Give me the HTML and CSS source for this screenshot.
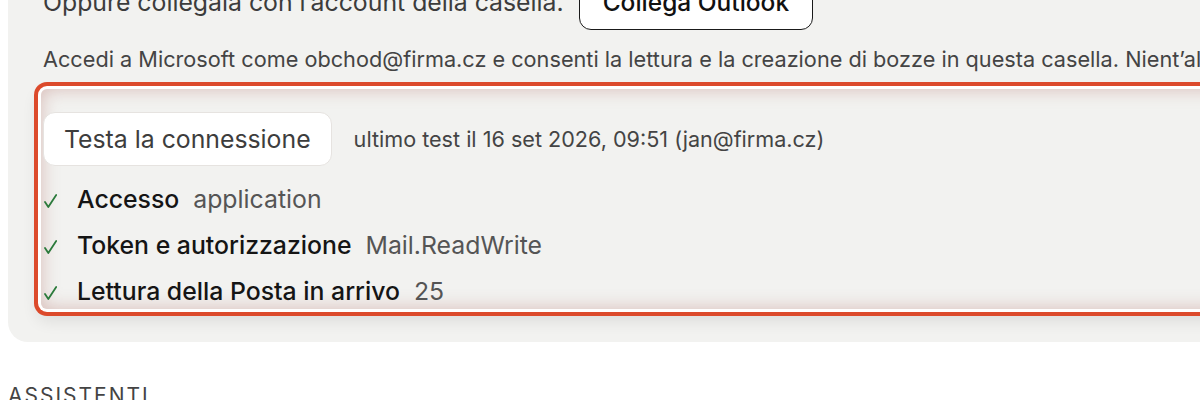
FILE: index.html
```html
<!DOCTYPE html>
<html lang="it">
<head>
<meta charset="utf-8">
<link rel="stylesheet" href="styles.css">
</head>
<body>
<div class="page">
  <section class="panel">
    <div class="connect-row">
      <span class="connect-text">Oppure collegala con l’account della casella.</span>
      <button class="btn-outlook">Collega Outlook</button>
    </div>
    <p class="hint">Accedi a Microsoft come obchod@firma.cz e consenti la lettura e la creazione di bozze in questa casella. Nient’altro viene letto o modificato.</p>
    <div class="test-box">
      <div class="test-head">
        <button class="btn-test">Testa la connessione</button>
        <span class="last-test">ultimo test il 16 set 2026, 09:51 (jan@firma.cz)</span>
      </div>
      <ul class="checks">
        <li class="check"><svg class="tick" viewBox="0 0 13 14" width="13" height="14"><path d="M1 8 L4.3 13 L12.2 1" fill="none" stroke="currentColor" stroke-width="1.8" stroke-linecap="round" stroke-linejoin="round"/></svg><span class="label">Accesso</span><span class="value">application</span></li>
        <li class="check"><svg class="tick" viewBox="0 0 13 14" width="13" height="14"><path d="M1 8 L4.3 13 L12.2 1" fill="none" stroke="currentColor" stroke-width="1.8" stroke-linecap="round" stroke-linejoin="round"/></svg><span class="label">Token e autorizzazione</span><span class="value">Mail.ReadWrite</span></li>
        <li class="check"><svg class="tick" viewBox="0 0 13 14" width="13" height="14"><path d="M1 8 L4.3 13 L12.2 1" fill="none" stroke="currentColor" stroke-width="1.8" stroke-linecap="round" stroke-linejoin="round"/></svg><span class="label">Lettura della Posta in arrivo</span><span class="value">25</span></li>
      </ul>
    </div>
  </section>
  <h2 class="section-title">Assistenti</h2>
</div>
</body>
</html>
```
FILE: styles.css
```css
html, body {
  margin: 0;
  padding: 0;
  background: #ffffff;
  overflow: hidden;
}
body {
  font-family: Inter, "Noto Sans", "Liberation Sans", sans-serif;
  color: #1c1c1c;
}
.page {
  width: 1200px;
  height: 400px;
  overflow: hidden;
}
.panel {
  width: 1500px;
  margin: -60px 0 0 8px;
  padding: 35px 0 33px 35px;
  background: #f2f2f0;
  border-radius: 20px;
  box-sizing: border-box;
}
.connect-row {
  display: flex;
  align-items: center;
  gap: 15px;
  height: 54px;
}
.connect-text {
  font-size: 24.8px;
  color: #3c3c3c;
}
.btn-outlook {
  font-family: inherit;
  font-size: 24.5px;
  font-weight: 500;
  color: #111;
  background: #fff;
  border: 1.5px solid #1a1a1a;
  border-radius: 12px;
  height: 56px;
  padding: 0 23px;
}
.hint {
  margin: 17px 0 0;
  font-size: 21.7px;
  color: #444;
  white-space: nowrap;
  line-height: 26px;
}
.test-box {
  margin: 17px 0 0 -2px;
  padding: 23px 0 0 2px;
  height: 220px;
  box-sizing: border-box;
  background: #f2f2f0;
  box-shadow:
    0 0 0 3px #ffffff,
    0 0 0 7px #dc4a2b,
    0 8px 16px 4px rgba(0, 0, 0, 0.09),
    inset 0 0 18px rgba(170, 90, 80, 0.36);
  border-radius: 6px;
}
.test-head {
  display: flex;
  align-items: center;
  gap: 22px;
}
.btn-test {
  font-family: inherit;
  font-size: 24.8px;
  color: #3d3d3d;
  background: #fff;
  border: 1px solid #e6e3e0;
  border-radius: 12px;
  height: 54px;
  padding: 0 20px;
}
.last-test {
  font-size: 21.6px;
  color: #444;
}
.checks {
  list-style: none;
  margin: 10px 0 0;
  padding: 0;
}
.check {
  display: flex;
  align-items: center;
  height: 46px;
  font-size: 24.8px;
}
.tick {
  flex: none;
  color: #2b7a3b;
  margin: 3px 20px 0 1px;
}
.label {
  font-weight: 500;
  color: #151515;
  margin-right: 14px;
}
.value {
  color: #555;
}
.section-title {
  margin: 41px 0 0 8px;
  font-size: 21px;
  font-weight: 400;
  letter-spacing: 2px;
  text-transform: uppercase;
  color: #444;
}
```
